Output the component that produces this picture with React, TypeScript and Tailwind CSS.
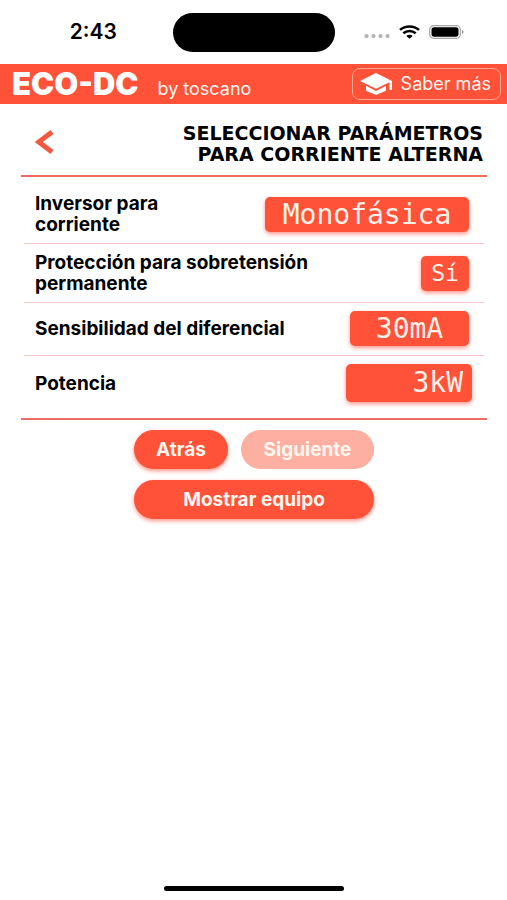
import { useState } from "react";
import type { ReactNode } from "react";

const fieldClass =
  "appearance-none rounded-[5px] bg-[#ff5238] font-['DejaVu_Sans_Mono',monospace] text-[#fff1e8] shadow-[0_2px_4px_rgba(255,60,40,0.55)] outline-none";

function StatusBar() {
  return (
    <div className="grid h-16 shrink-0 grid-cols-[1fr_auto_1fr] items-center">
      <div className="pl-[14px] text-center text-[21px] font-semibold leading-6">2:43</div>
      <div className="h-[39px] w-[162px] rounded-full bg-black" />
      <div className="flex items-center gap-[9px] pl-[29px]">
        <svg width="26" height="12" viewBox="0 0 26 12" fill="#b4b4b4" aria-hidden="true">
          <circle cx="2.5" cy="10" r="2.1" />
          <circle cx="9.5" cy="10" r="2.1" />
          <circle cx="16.5" cy="10" r="2.1" />
          <circle cx="23.5" cy="10" r="2.1" />
        </svg>
        <svg width="21" height="14" viewBox="0 0 21 14" fill="none" stroke="#000" strokeWidth="2.5" aria-hidden="true">
          <path d="M1 4.9C6.2.2 14.800.2 20 4.900" />
          <path d="M4.300 8.300C7.900 5.200 13.100 5.200 16.700 8.300" />
          <path d="M7.300 10.900C9.200 9.500 11.800 9.500 13.700 10.900L10.500 13.700Z" fill="#000" stroke="none" />
        </svg>
        <svg width="35" height="14" viewBox="0 0 35 14" aria-hidden="true">
          <rect x=".7" y=".7" width="30.600" height="12.600" rx="4" fill="none" stroke="#a3a3a3" strokeWidth="1.200" />
          <rect x="2.500" y="2.300" width="27" height="9.400" rx="2.600" fill="#000" />
          <path d="M33 5v4c1.800-.5 1.800-3.500 0-4Z" fill="#8a8a8a" />
        </svg>
      </div>
    </div>
  );
}

function Row({ id, label, children, className }: { id: string; label: string; children: ReactNode; className: string }) {
  return (
    <div className={`mx-[3px] flex items-center justify-between gap-4 pl-[11px] ${className}`}>
      <label htmlFor={id} className="max-w-[300px] whitespace-pre-line text-[19px] font-bold leading-[21px]">
        {label}
      </label>
      {children}
    </div>
  );
}

export default function App() {
  const [power, setPower] = useState("3kW");

  return (
    <div className="flex min-h-screen flex-col bg-white font-['Inter',sans-serif] text-black [font-optical-sizing:none]">
      <StatusBar />
      <header className="flex h-10 shrink-0 items-center justify-between bg-[#ff5238] pl-3 pr-[6px] text-[#fff6f0]">
        <div className="flex items-baseline gap-[19px]">
          <span className="text-[31px] font-black leading-9 text-white">ECO-DC</span>
          <span className="text-[18px] leading-6">by toscano</span>
        </div>
        <button type="button" className="flex h-8 items-center gap-2 rounded-lg border border-[#ffa48f] pl-[7px] pr-[9px] text-[18px] leading-6">
          <svg width="33" height="22" viewBox="0 0 33 22" fill="#fff" aria-hidden="true">
            <path d="M0 8 16 0l16 8v9h-2.500V9.300L16 15.800Z" />
            <path d="M6 12.800v4.900L16 22l10-4.300v-4.900L16 17.900Z" />
          </svg>
          Saber más
        </button>
      </header>

      <main className="pl-[21px] pr-5">
        <div className="flex h-[71px] items-center justify-between pl-[14px] pr-1 pt-[9px]">
          <button type="button" aria-label="Volver" className="mb-1">
            <svg width="20" height="24" viewBox="0 0 20 24" fill="none" stroke="#f4573d" strokeWidth="4.800" aria-hidden="true">
              <path d="M17 2 3.800 12 17 22" />
            </svg>
          </button>
          <h1 className="text-right font-['DejaVu_Sans',sans-serif] text-[19px] font-black leading-[21px]">
            SELECCIONAR PARÁMETROS
            <br />
            PARA CORRIENTE ALTERNA
          </h1>
        </div>

        <form className="border-y-2 border-[#ee6c62]">
          <Row id="inversor" label={"Inversor para\ncorriente"} className="h-[67px] border-b border-[#fbc9ca] pr-[15px] pt-[8px]">
            <select id="inversor" className={`${fieldClass} h-[35px] w-[204px] text-center text-[28px] leading-[35px]`}>
              <option>Monofásica</option>
            </select>
          </Row>
          <Row id="proteccion" label={"Protección para sobretensión\npermanente"} className="h-[59px] border-b border-[#fbc9ca] pr-[15px]">
            <select id="proteccion" className={`${fieldClass} h-[35px] w-12 text-center text-[23px] leading-[35px]`}>
              <option>Sí</option>
            </select>
          </Row>
          <Row id="sensibilidad" label="Sensibilidad del diferencial" className="h-[53px] border-b border-[#fbc9ca] pb-[2px] pr-[15px]">
            <select id="sensibilidad" className={`${fieldClass} h-[35px] w-[119px] text-center text-[28px] leading-[35px]`}>
              <option>30mA</option>
            </select>
          </Row>
          <Row id="potencia" label="Potencia" className="h-[62px] pb-[8px] pr-3">
            <input
              id="potencia"
              value={power}
              onChange={(event) => setPower(event.target.value)}
              className={`${fieldClass} h-[38px] w-[126px] px-[9px] text-right text-[28px]`}
            />
          </Row>
        </form>

        <div className="mx-auto mt-[10px] grid w-60 grid-cols-[94px_1fr] gap-x-[13px] gap-y-[11px] text-[19px] font-bold leading-[21px] text-[#fff6ee]">
          <button type="button" className="h-[39px] rounded-full bg-[#ff5238] shadow-[0_2px_4px_rgba(255,60,40,0.55)]">
            Atrás
          </button>
          <button type="button" disabled className="h-[39px] rounded-full bg-[#fdb0a1]">
            Siguiente
          </button>
          <button type="button" className="col-span-2 h-[39px] rounded-full bg-[#ff5238] shadow-[0_2px_4px_rgba(255,60,40,0.55)]">
            Mostrar equipo
          </button>
        </div>
      </main>

      <div className="mx-auto mb-[9px] mt-auto h-[5px] w-[180px] rounded-full bg-black" />
    </div>
  );
}
